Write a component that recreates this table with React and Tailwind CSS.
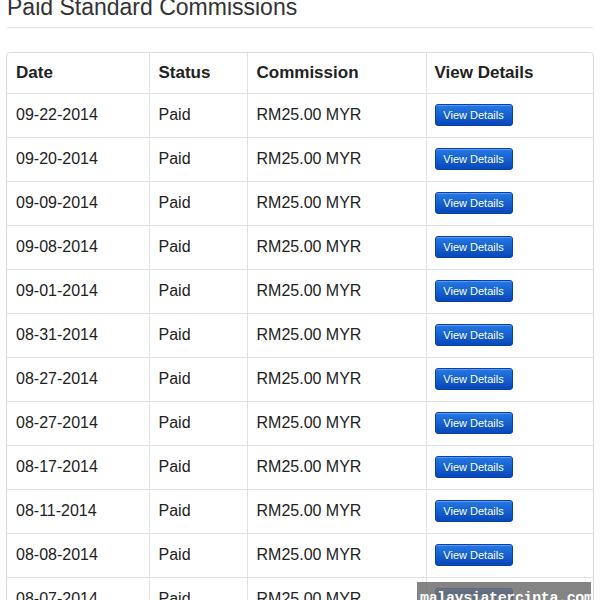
const rows = [
  '09-22-2014',
  '09-20-2014',
  '09-09-2014',
  '09-08-2014',
  '09-01-2014',
  '08-31-2014',
  '08-27-2014',
  '08-27-2014',
  '08-17-2014',
  '08-11-2014',
  '08-08-2014',
  '08-07-2014',
  '08-02-2014',
];

const App = () => {
  return (
    <div className="relative w-[600px] h-[600px] overflow-hidden bg-white text-[#222] font-['Liberation_Sans',Arial,sans-serif]">
      {/* Title */}
      <div className="mx-[7px] pb-[6px] border-b border-[#e6e6e6]">
        <h1 className="mt-[-7px] text-[23px] leading-[28px] text-[#333]">Paid Standard Commissions</h1>
      </div>

      {/* Table */}
      <div className="mt-[24px] mx-[6px] border border-[#dcdcdc] rounded-[4px] overflow-hidden">
        <table className="w-full border-collapse table-fixed">
          <colgroup>
            <col className="w-[142px]" />
            <col className="w-[98px]" />
            <col className="w-[179px]" />
            <col />
          </colgroup>
          <thead>
            <tr className="h-[40px]">
              <th className="text-left font-bold text-[17px] pl-[9px] text-[#222]">Date</th>
              <th className="text-left font-bold text-[17px] pl-[9px] border-l border-[#e2e2e2] text-[#222]">Status</th>
              <th className="text-left font-bold text-[17px] pl-[9px] border-l border-[#e2e2e2] text-[#222]">Commission</th>
              <th className="text-left font-bold text-[17px] pl-[8px] border-l border-[#e2e2e2] text-[#222]">View Details</th>
            </tr>
          </thead>
          <tbody>
            {rows.map((date, i) => (
              <tr key={i} className="h-[44px] border-t border-[#e2e2e2]">
                <td className="pl-[9px] text-[16px]">{date}</td>
                <td className="pl-[9px] text-[16px] border-l border-[#e2e2e2]">Paid</td>
                <td className="pl-[9px] text-[16px] border-l border-[#e2e2e2]">RM25.00 MYR</td>
                <td className="pl-[8px] border-l border-[#e2e2e2]">
                  <button className="block w-[78px] h-[22px] rounded-[3px] border border-[#0842a6] bg-gradient-to-b from-[#2479e4] to-[#0947bb] text-white text-[11px] leading-[20px] shadow-[inset_0_1px_0_rgba(255,255,255,0.25)]">
                    View Details
                  </button>
                </td>
              </tr>
            ))}
          </tbody>
        </table>
      </div>

      {/* Watermark */}
      <div className="absolute left-[417px] top-[582px] w-[174px] h-[30px] bg-[#6e6e6e]/85 pl-[3px] pt-[7px] text-white text-[15px] leading-[20px] font-bold font-['Liberation_Mono',monospace] tracking-tight">
        malaysiatercinta.com
      </div>
    </div>
  );
};

export default App;
